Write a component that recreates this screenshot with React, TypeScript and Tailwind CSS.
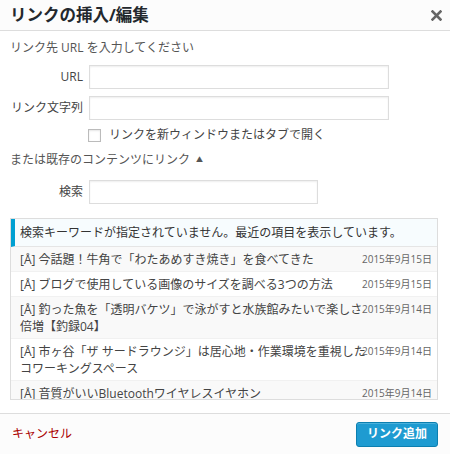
import React from "react";

const items = [
  { title: "[Å] 今話題！牛角で「わたあめすき焼き」を食べてきた", date: "2015年9月15日" },
  { title: "[Å] ブログで使用している画像のサイズを調べる3つの方法", date: "2015年9月15日" },
  { title: "[Å] 釣った魚を「透明バケツ」で泳がすと水族館みたいで楽しさ倍増【釣録04】", date: "2015年9月14日" },
  { title: "[Å] 市ヶ谷「ザ サードラウンジ」は居心地・作業環境を重視したコワーキングスペース", date: "2015年9月14日" },
  { title: "[Å] 音質がいいBluetoothワイヤレスイヤホン", date: "2015年9月14日" },
];

function Field({ label, width }: { label: string; width: string }) {
  return (
    <div className="flex items-center">
      <label className="w-[79px] pr-[6px] text-right text-[12px] text-[#444] whitespace-nowrap shrink-0">
        {label}
      </label>
      <div className={`${width} h-6 border border-[#ddd] bg-white shadow-[inset_0_1px_2px_rgba(0,0,0,0.07)]`} />
    </div>
  );
}

export default function App() {
  return (
    <div className="w-[450px] h-[454px] bg-white flex flex-col overflow-hidden font-[family-name:'Open_Sans','Noto_Sans_CJK_JP',sans-serif] text-[#444]">
      {/* Header */}
      <div className="h-[31px] shrink-0 border-b border-[#ddd] bg-[#fcfcfc] flex items-center justify-between pl-[10px] pr-[8px]">
        <h1 className="text-[16.5px] font-bold text-[#23282d] leading-none">リンクの挿入/編集</h1>
        <svg width="11" height="11" viewBox="0 0 11 11" className="text-[#666]">
          <path d="M1.5 1.5 L9.5 9.5 M9.5 1.5 L1.5 9.5" stroke="currentColor" strokeWidth="2.6" strokeLinecap="square" />
        </svg>
      </div>

      {/* Body */}
      <div className="flex-1 px-[10px] pt-[9px]">
        <p className="text-[12px] leading-4 text-[#555]">リンク先 URL を入力してください</p>

        <div className="mt-[9px] flex flex-col gap-[7px]">
          <Field label="URL" width="w-[300px]" />
          <Field label="リンク文字列" width="w-[300px]" />
          <div className="flex items-center pl-[78px] gap-[8px]">
            <div className="w-[13px] h-[13px] border border-[#bbb] bg-white shadow-[inset_0_1px_2px_rgba(0,0,0,0.1)]" />
            <span className="text-[12px] leading-4 text-[#444]">リンクを新ウィンドウまたはタブで開く</span>
          </div>
        </div>

        <p className="mt-[9px] text-[12px] leading-4 text-[#555] flex items-center gap-[6px]">
          または既存のコンテンツにリンク
          <span className="text-[7px] text-[#555]">▲</span>
        </p>

        <div className="mt-[12px]">
          <Field label="検索" width="w-[229px]" />
        </div>

        {/* Results */}
        <div className="mt-[14px] mr-[2px] h-[182px] border border-[#ddd] overflow-hidden">
          <div className="border-l-4 border-[#00a0d2] bg-[#f7fcfe] pl-[5px] py-[5px] border-b border-b-[#e5e5e5] text-[12px] leading-[17px] text-[#333]">
            検索キーワードが指定されていません。最近の項目を表示しています。
          </div>
          <ul>
            {items.map((item, i) => (
              <li
                key={i}
                className={`flex items-start pl-[9px] pr-[5px] pt-[4px] pb-[3px] border-b border-[#f1f1f1] ${
                  i % 2 === 0 ? "bg-[#f9f9f9]" : "bg-white"
                }`}
              >
                <span className="w-[350px] -mr-[12px] shrink-0 text-[12px] leading-[17px] text-[#444]">{item.title}</span>
                <span className="ml-auto whitespace-nowrap text-[10px] leading-[17px] text-[#666]">{item.date}</span>
              </li>
            ))}
          </ul>
        </div>
      </div>

      {/* Footer */}
      <div className="h-[41px] shrink-0 border-t border-[#ddd] bg-[#fcfcfc] flex items-center justify-between px-[12px]">
        <span className="text-[12px] text-[#a00]">キャンセル</span>
        <button className="h-[25px] px-[10px] rounded-[3px] bg-[#1e9bd1] border border-[#0c7fb0] shadow-[inset_0_1px_0_rgba(120,200,230,0.5)] text-white text-[12px] font-bold">
          リンク追加
        </button>
      </div>
    </div>
  );
}
